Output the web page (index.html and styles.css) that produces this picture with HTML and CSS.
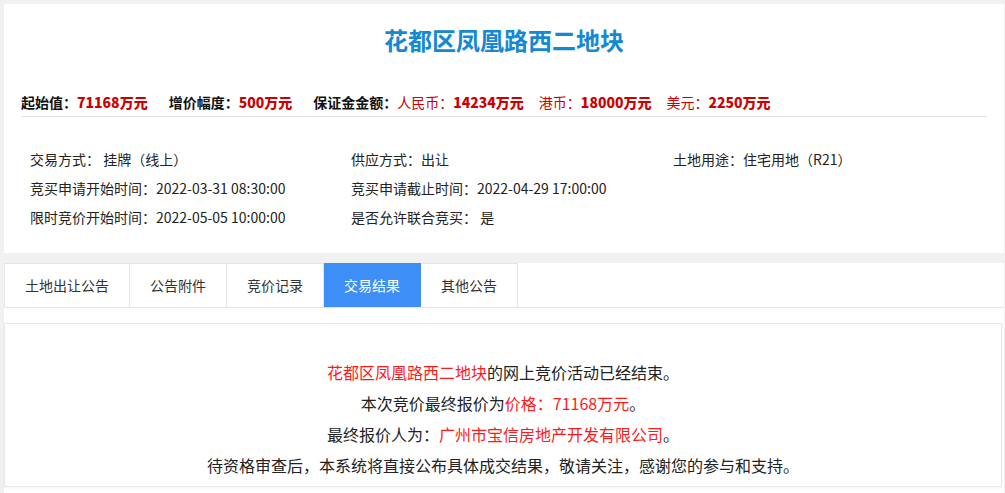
FILE: index.html
```html
<!DOCTYPE html>
<html lang="zh-CN">
<head>
  <meta charset="UTF-8" />
  <meta name="viewport" content="width=device-width, initial-scale=1" />
  <title>花都区凤凰路西二地块</title>
  <link rel="stylesheet" href="styles.css">
</head>
<body>

<div class="land-info">
  <h1 class="land-title">花都区凤凰路西二地块</h1>

  <!-- 价格信息 -->
  <div class="price-row">
    <span class="price-item">起始值：<b>71168万元</b></span>
    <span class="price-item">增价幅度：<b>500万元</b></span>
    <span class="price-item">保证金金额：<em>人民币：</em><b>14234万元</b></span>
    <span class="price-item small-gap"><em>港币：</em><b>18000万元</b></span>
    <span class="price-item small-gap"><em>美元：</em><b>2250万元</b></span>
  </div>

  <!-- 交易信息 -->
  <div class="detail-grid">
    <div>交易方式： 挂牌（线上）</div>
    <div>供应方式：出让</div>
    <div>土地用途：住宅用地（R21）</div>
    <div>竞买申请开始时间：2022-03-31 08:30:00</div>
    <div>竞买申请截止时间：2022-04-29 17:00:00</div>
    <div></div>
    <div>限时竞价开始时间：2022-05-05 10:00:00</div>
    <div>是否允许联合竞买： 是</div>
    <div></div>
  </div>
</div>

<div class="tab-panel">
  <ul class="tabs">
    <li class="tab-wide">土地出让公告</li>
    <li>公告附件</li>
    <li>竞价记录</li>
    <li class="active">交易结果</li>
    <li>其他公告</li>
  </ul>

  <div class="result-box">
    <p><span class="red">花都区凤凰路西二地块</span>的网上竞价活动已经结束。</p>
    <p>本次竞价最终报价为<span class="red">价格：71168万元</span>。</p>
    <p>最终报价人为：<span class="red">广州市宝信房地产开发有限公司</span>。</p>
    <p>待资格审查后，本系统将直接公布具体成交结果，敬请关注，感谢您的参与和支持。</p>
  </div>
</div>

</body>
</html>
```

FILE: styles.css
```css
* {
  box-sizing: border-box;
}

body {
  font-family: "Microsoft YaHei", "Noto Sans CJK SC", sans-serif;
  background: #f1f1f1;
  margin: 0;
  padding: 4px 1px 0 4px;
  color: #222;
  font-size: 14px;
  text-spacing-trim: space-all;
}

.land-info {
  background: #fff;
  padding: 16px 17px 21px 17px;
}

.land-title {
  margin: 0;
  text-align: center;
  font-size: 24px;
  line-height: 40px;
  color: #1489d3;
  font-weight: 700;
}

/* 价格信息 */
.price-row {
  margin-top: 32px;
  line-height: 20px;
  padding-bottom: 4px;
  border-bottom: 1px solid #dfe1e8;
  font-weight: 700;
  color: #111;
  display: flex;
  gap: 21px;
}

.price-row b {
  color: #cc0000;
}

.price-row em {
  font-style: normal;
  font-weight: 400;
  color: #cc0000;
}

.price-row .small-gap {
  margin-left: -6px;
}

.detail-grid {
  display: grid;
  grid-template-columns: 321px 322px 1fr;
  margin-top: 28px;
  padding-left: 9px;
  line-height: 29px;
}

/* 选项卡 */
.tab-panel {
  background: #fff;
  margin-top: 10px;
  padding-bottom: 6px;
}

.tabs {
  list-style: none;
  margin: 0;
  padding: 0;
  display: flex;
  border-bottom: 1px solid #e4e4ea;
}

.tabs li {
  width: 97px;
  height: 44px;
  line-height: 43px;
  text-align: center;
  color: #333;
  border-top: 1px solid #e6e6ea;
  border-right: 1px solid #e6e6ea;
  cursor: pointer;
}

.tabs li.tab-wide {
  width: 126px;
  border-left: 1px solid #e6e6ea;
}

.tabs li.active {
  background: #3e8ef7;
  border-color: #3e8ef7;
  color: #fff;
}

.result-box {
  margin: 15px 2px 0 0;
  border: 1px solid #e8e8e8;
  box-shadow: 0 1px 2px rgba(0, 0, 0, 0.05);
  padding: 33px 0 5px;
  text-align: center;
  font-size: 16px;
  line-height: 31px;
}

.result-box p {
  margin: 0;
}

.red {
  color: #ff1a1a;
}
```
